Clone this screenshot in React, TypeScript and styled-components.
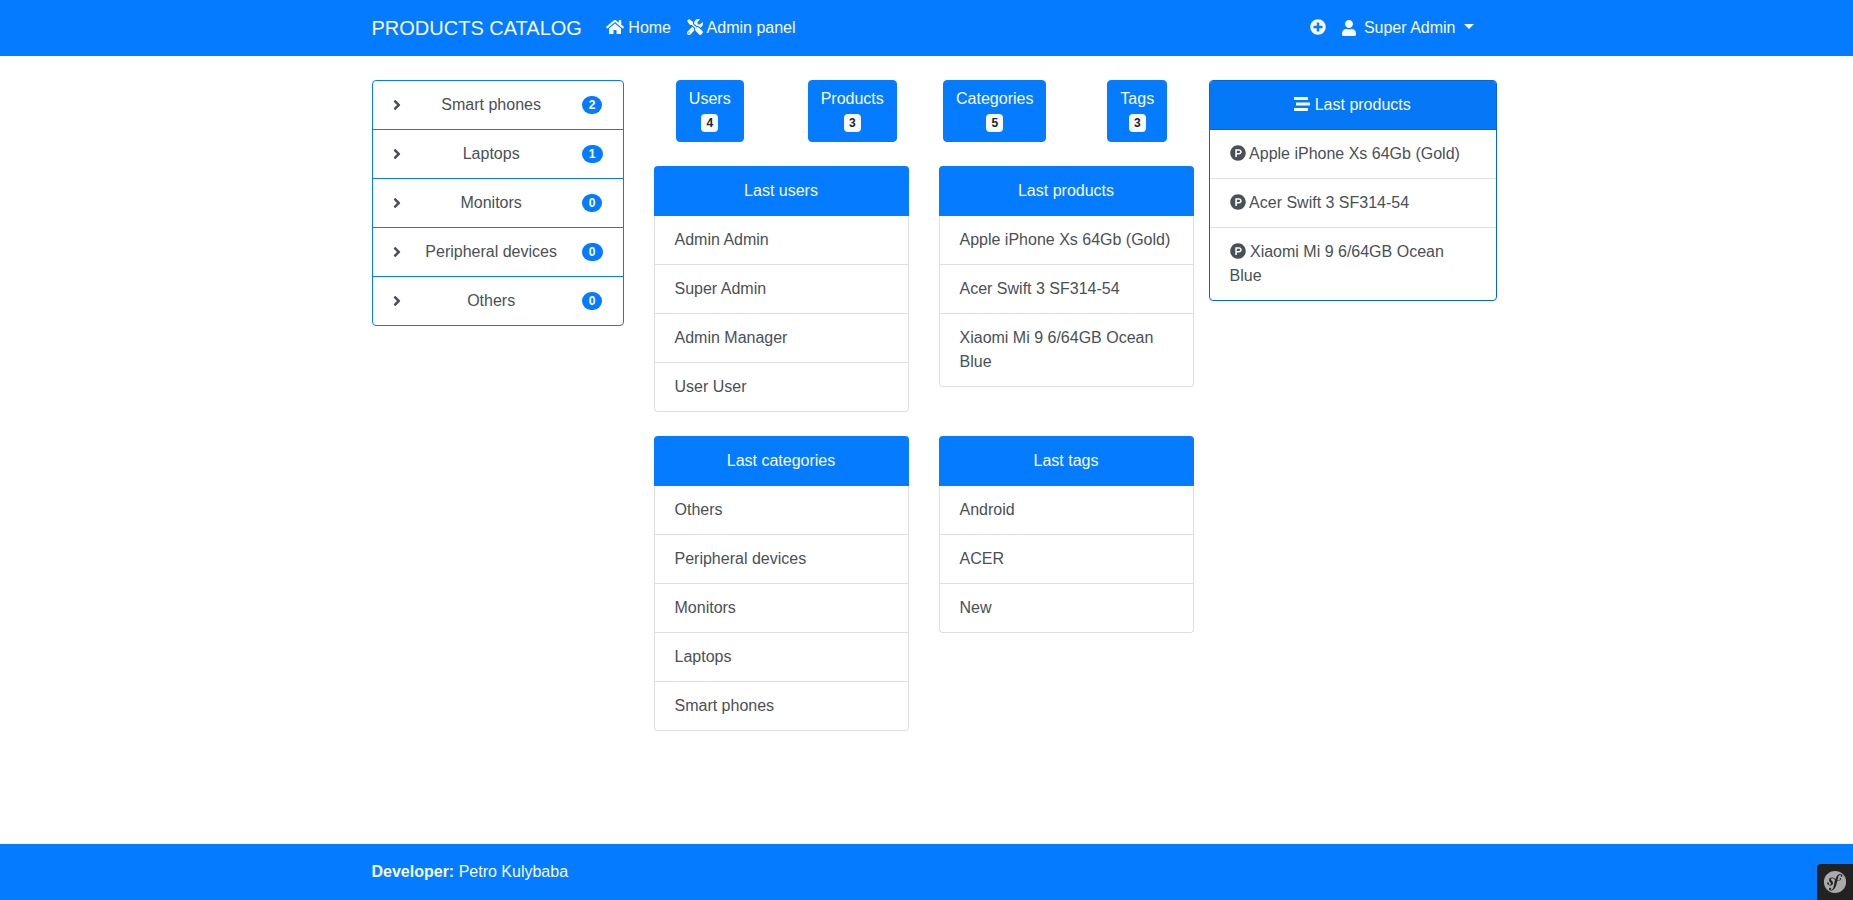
import React from 'react';
import styled, { createGlobalStyle, css } from 'styled-components';
import {
  FaAngleRight,
  FaHome,
  FaPlusCircle,
  FaProductHunt,
  FaStream,
  FaTools,
  FaUser,
} from 'react-icons/fa';

const blue = '#057cff';
const light = '#f8f9fa';
const gray = '#495057';
const line = 'rgba(0, 0, 0, 0.125)';
const darkBlue = '#0069d9';

const GlobalStyle = createGlobalStyle`
  *, *::before, *::after { box-sizing: border-box; }
  body {
    margin: 0;
    background: #fff;
    color: #212529;
    font: 400 16px/24px "Liberation Sans", Arial, sans-serif;
  }
  a { color: inherit; text-decoration: none; }
  button { font: inherit; cursor: pointer; }
`;

const Page = styled.div`
  display: flex;
  flex-direction: column;
  min-height: 100vh;
`;

const Container = styled.div`
  width: 100%;
  max-width: 1140px;
  margin: 0 auto;
  padding: 0 15px;
`;

const iconStyle = css<{ $width?: number }>`
  width: ${({ $width = 16 }) => $width}px;
  height: 16px;
  vertical-align: -2px;
`;

const HomeIcon = styled(FaHome)`${iconStyle}`;
const ToolsIcon = styled(FaTools)`${iconStyle}`;
const PlusIcon = styled(FaPlusCircle)`${iconStyle}`;
const UserIcon = styled(FaUser)`${iconStyle}`;
const StreamIcon = styled(FaStream)`${iconStyle}`;
const ProductIcon = styled(FaProductHunt)`${iconStyle}`;
const AngleIcon = styled(FaAngleRight)`${iconStyle}`;

const Navbar = styled.header`
  background: ${blue};
  color: ${light};
`;

const NavInner = styled(Container)`
  display: flex;
  flex-wrap: wrap;
  align-items: center;
  min-height: 56px;
`;

const Brand = styled.a`
  margin-right: 16px;
  font-size: 20px;
  line-height: 30px;
`;

const Nav = styled.nav`
  display: flex;
  flex: 1;
`;

const NavLink = styled.a`
  padding: 8px;
`;

const Spacer = styled.span`
  flex: 1;
`;

const NavToggle = styled.button`
  display: flex;
  align-items: center;
  gap: 8px;
  padding: 8px;
  border: 0;
  background: none;
  color: inherit;

  &::after {
    content: '';
    margin-bottom: 3px;
    border: 5px solid transparent;
    border-top-color: currentColor;
    border-bottom: 0;
  }
`;

const Main = styled.main`
  flex: 1;
`;

const Columns = styled(Container)`
  display: grid;
  grid-template-columns: 267px minmax(0, 1fr) 288px;
  align-items: start;
  padding: 24px 0 24px 15px;

  @media (max-width: 1000px) {
    grid-template-columns: minmax(0, 1fr);
    gap: 24px;
    padding-right: 15px;
  }
`;

const List = styled.ul`
  margin: 0;
  padding: 0;
  list-style: none;
`;

const CategoryList = styled(List)`
  margin-right: 15px;
  border: 1px solid ${blue};
  border-radius: 4px;
`;

const CategoryItem = styled.li`
  & + & {
    border-top: 1px solid ${blue};
  }
`;

const CategoryLink = styled.a`
  display: flex;
  align-items: center;
  justify-content: space-between;
  padding: 12px 20px;
  color: ${gray};
`;

const Badge = styled.span<{ $pill?: boolean }>`
  padding: 3px ${({ $pill }) => ($pill ? 7 : 5)}px;
  border-radius: ${({ $pill }) => ($pill ? 9 : 4)}px;
  background: ${({ $pill }) => ($pill ? blue : light)};
  color: ${({ $pill }) => ($pill ? '#fff' : '#212529')};
  font-size: 12px;
  font-weight: 700;
  line-height: 12px;
`;

const Stats = styled.div`
  display: grid;
  grid-template-columns: repeat(4, minmax(0, 1fr));
  justify-items: center;
  margin-bottom: 24px;
`;

const StatButton = styled.button`
  display: flex;
  flex-direction: column;
  align-items: center;
  gap: 3px;
  padding: 6px 12px 9px;
  border: 1px solid ${blue};
  border-radius: 4px;
  background: ${blue};
  color: ${light};
`;

const CardGrid = styled.div`
  display: grid;
  grid-template-columns: repeat(2, minmax(0, 1fr));
  align-items: start;
  gap: 24px 30px;
  padding: 0 15px;
`;

const Card = styled.section<{ $outlined?: boolean }>`
  border: 1px solid ${({ $outlined }) => ($outlined ? darkBlue : line)};
  border-top-width: ${({ $outlined }) => ($outlined ? 1 : 0)}px;
  border-radius: 4px;
`;

const CardTitle = styled.h2<{ $outlined?: boolean }>`
  margin: ${({ $outlined }) => ($outlined ? '0' : '0 -1px')};
  padding: ${({ $outlined }) => ($outlined ? '12px 20px' : '13px 20px')};
  border-bottom: ${({ $outlined }) => ($outlined ? `1px solid ${darkBlue}` : '0')};
  border-radius: ${({ $outlined }) => ($outlined ? '3px 3px 0 0' : '4px 4px 0 0')};
  background: ${({ $outlined }) => ($outlined ? '#0578f7' : blue)};
  color: ${light};
  font-size: 16px;
  font-weight: 400;
  text-align: center;
`;

const CardItem = styled.li`
  padding: 12px 20px;
  color: ${gray};

  & + & {
    border-top: 1px solid ${line};
  }
`;

const Footer = styled.footer`
  padding: 16px 0;
  background: ${blue};
  color: ${light};
`;

const DebugToggle = styled.button`
  position: fixed;
  right: 0;
  bottom: 0;
  width: 36px;
  height: 36px;
  padding: 6px;
  border: 0;
  border-radius: 4px 0 0 0;
  background: #222;

  svg {
    display: block;
    width: 24px;
    height: 24px;
    fill: #aaa;
  }
`;

const categories = [
  { name: 'Smart phones', count: 2 },
  { name: 'Laptops', count: 1 },
  { name: 'Monitors', count: 0 },
  { name: 'Peripheral devices', count: 0 },
  { name: 'Others', count: 0 },
];

const stats = [
  { name: 'Users', count: 4 },
  { name: 'Products', count: 3 },
  { name: 'Categories', count: 5 },
  { name: 'Tags', count: 3 },
];

const products = [
  'Apple iPhone Xs 64Gb (Gold)',
  'Acer Swift 3 SF314-54',
  'Xiaomi Mi 9 6/64GB Ocean Blue',
];

const cards = [
  { title: 'Last users', items: ['Admin Admin', 'Super Admin', 'Admin Manager', 'User User'] },
  { title: 'Last products', items: products },
  {
    title: 'Last categories',
    items: ['Others', 'Peripheral devices', 'Monitors', 'Laptops', 'Smart phones'],
  },
  { title: 'Last tags', items: ['Android', 'ACER', 'New'] },
];

export default function App() {
  return (
    <Page>
      <GlobalStyle />
      <Navbar>
        <NavInner>
          <Brand href="#">PRODUCTS CATALOG</Brand>
          <Nav>
            <NavLink href="#">
              <HomeIcon $width={18} /> Home
            </NavLink>
            <NavLink href="#">
              <ToolsIcon /> Admin panel
            </NavLink>
            <Spacer />
            <NavLink href="#" aria-label="Add">
              <PlusIcon />
            </NavLink>
            <NavToggle type="button">
              <UserIcon $width={14} />
              Super Admin
            </NavToggle>
          </Nav>
        </NavInner>
      </Navbar>

      <Main>
        <Columns>
          <CategoryList>
            {categories.map(({ name, count }) => (
              <CategoryItem key={name}>
                <CategoryLink href="#">
                  <AngleIcon $width={8} />
                  {name}
                  <Badge $pill>{count}</Badge>
                </CategoryLink>
              </CategoryItem>
            ))}
          </CategoryList>

          <div>
            <Stats>
              {stats.map(({ name, count }) => (
                <StatButton type="button" key={name}>
                  {name}
                  <Badge>{count}</Badge>
                </StatButton>
              ))}
            </Stats>
            <CardGrid>
              {cards.map(({ title, items }) => (
                <Card key={title}>
                  <CardTitle>{title}</CardTitle>
                  <List>
                    {items.map((item) => (
                      <CardItem key={item}>
                        <a href="#">{item}</a>
                      </CardItem>
                    ))}
                  </List>
                </Card>
              ))}
            </CardGrid>
          </div>

          <Card $outlined>
            <CardTitle $outlined>
              <StreamIcon /> Last products
            </CardTitle>
            <List>
              {products.map((item) => (
                <CardItem key={item}>
                  <a href="#">
                    <ProductIcon /> {item}
                  </a>
                </CardItem>
              ))}
            </List>
          </Card>
        </Columns>
      </Main>

      <Footer>
        <Container>
          <strong>Developer:</strong> Petro Kulybaba
        </Container>
      </Footer>

      <DebugToggle type="button" aria-label="Show toolbar">
        <svg viewBox="0 0 24 24" aria-hidden="true">
          <path d="M12 .9C5.8.9.9 5.8.9 12a11 11 0 1 0 22.2 0A11 11 0 0 0 12 .9zm6.5 6c-.6 0-.9-.3-.9-.8 0-.2 0-.4.2-.6l.2-.4c0-.3-.5-.4-.6-.4-1.8.1-2.3 2.5-2.7 4.4l-.2 1c1 .2 1.8 0 2.2-.3.6-.4-.2-.7-.1-1.2.1-.3.5-.5.7-.6.5 0 .7.5.7.9 0 .7-1 1.8-3 1.8l-.6-.1-.6 2.4c-.4 1.6-.8 3.8-2.4 5.7-1.4 1.7-2.9 1.9-3.5 1.9-1.2 0-1.9-.6-2-1.5 0-.8.7-1.3 1.2-1.3.6 0 1.1.5 1.1 1s-.2.6-.4.6c-.1.1-.3.2-.3.4 0 .1.1.3.4.3.5 0 .8-.3 1.1-.5 1.2-.9 1.6-2.7 2.2-5.7l.1-.7.7-3.2c-.8-.6-1.3-1.4-2.4-1.7-.6-.1-1.1.1-1.5.5-.4.5-.2 1.1.2 1.5l.7.6c.7.8 1.2 1.6 1 2.5-.3 1.5-2 2.6-4 1.9-1.8-.6-2-1.8-1.8-2.5.2-.6.6-.7 1.1-.6.5.2.6.7.6 1.2l-.1.3c-.2.1-.3.3-.3.4-.1.4.4.6.7.7.7.3 1.6-.2 1.8-.8.2-.6-.2-1.1-.4-1.2l-.7-.8c-.4-.4-1.1-1.4-.7-2.6.1-.5.4-.9.7-1.3a4 4 0 0 1 2.8-.6c1.2.4 1.8 1.1 2.6 1.8.5-1.2 1-2.4 1.8-3.5.9-.9 1.9-1.6 3.1-1.7 1.3.2 2.2.7 2.2 1.6 0 .4-.2 1.1-.9 1.1z" />
        </svg>
      </DebugToggle>
    </Page>
  );
}
